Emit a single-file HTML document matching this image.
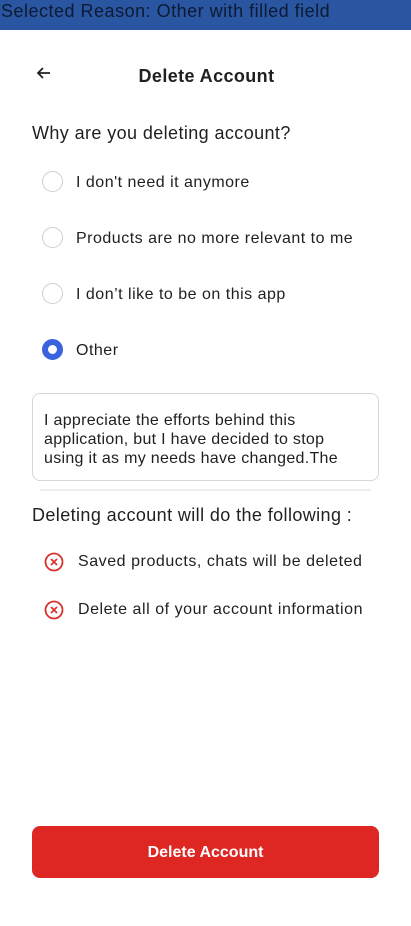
<!DOCTYPE html><html><head><style>
body{margin:0;width:411px;height:926px;background:#fff;font-family:"Liberation Sans",sans-serif;color:#1f1f1f;position:relative;overflow:hidden}
.a{position:absolute}
.bar{left:0;top:0;width:411px;height:30px;background:#2a55a0;color:#0c1a33;font-size:18px;line-height:22px;padding-left:1px;letter-spacing:0.5px}
.r{width:21px;height:21px;border:1.5px solid #cfcfcf;border-radius:50%;box-sizing:border-box;left:42px}
.t{font-size:16px;left:76px;letter-spacing:0.5px}
.x{left:44px;width:20px;height:20px}
</style></head><body>
<div class="a bar">Selected Reason: Other with filled field</div>
<svg class="a" style="left:36px;top:65px" width="16" height="16" viewBox="0 0 16 16"><path d="M14 8H2M7 3L2 8l5 5" fill="none" stroke="#222" stroke-width="1.8"/></svg>
<div class="a" style="left:0;width:411px;text-align:center;top:66px;font-size:18px;font-weight:bold;letter-spacing:0.4px;padding-left:1px">Delete Account</div>
<div class="a" style="left:32px;top:123px;font-size:18px;letter-spacing:0.4px">Why are you deleting account?</div>
<div class="a r" style="top:171px"></div><div class="a t" style="top:174px">I don't need it anymore</div>
<div class="a r" style="top:227px"></div><div class="a t" style="top:230px">Products are no more relevant to me</div>
<div class="a r" style="top:283px"></div><div class="a t" style="top:286px">I don’t like to be on this app</div>
<div class="a r" style="top:339px;border:6px solid #3a63e0"></div><div class="a t" style="top:342px">Other</div>
<div class="a" style="left:32px;top:393px;width:347px;height:88px;border:1px solid #d6d6d6;border-radius:8px;box-sizing:border-box;padding:17px 11px;font-size:16px;line-height:19px;letter-spacing:0.3px;white-space:nowrap">I appreciate the efforts behind this<br>application, but I have decided to stop<br>using it as my needs have changed.The</div>
<div class="a" style="left:40px;top:489px;width:331px;height:2px;background:#eee"></div>
<div class="a" style="left:32px;top:505px;font-size:18px;letter-spacing:0.4px">Deleting account will do the following :</div>
<svg class="a x" style="top:552px" viewBox="0 0 20 20"><circle cx="10" cy="10" r="8.5" fill="none" stroke="#d9302c" stroke-width="1.8"/><path d="M7 7l6 6M13 7l-6 6" stroke="#d9302c" stroke-width="1.6"/></svg>
<div class="a" style="left:78px;top:553px;font-size:16px;letter-spacing:0.55px">Saved products, chats will be deleted</div>
<svg class="a x" style="top:600px" viewBox="0 0 20 20"><circle cx="10" cy="10" r="8.5" fill="none" stroke="#d9302c" stroke-width="1.8"/><path d="M7 7l6 6M13 7l-6 6" stroke="#d9302c" stroke-width="1.6"/></svg>
<div class="a" style="left:78px;top:601px;font-size:16px;letter-spacing:0.55px">Delete all of your account information</div>
<div class="a" style="left:32px;top:826px;width:347px;height:52px;background:#de2623;border-radius:8px;color:#fff;font-size:16px;font-weight:bold;text-align:center;line-height:54px">Delete Account</div>
</body></html>
